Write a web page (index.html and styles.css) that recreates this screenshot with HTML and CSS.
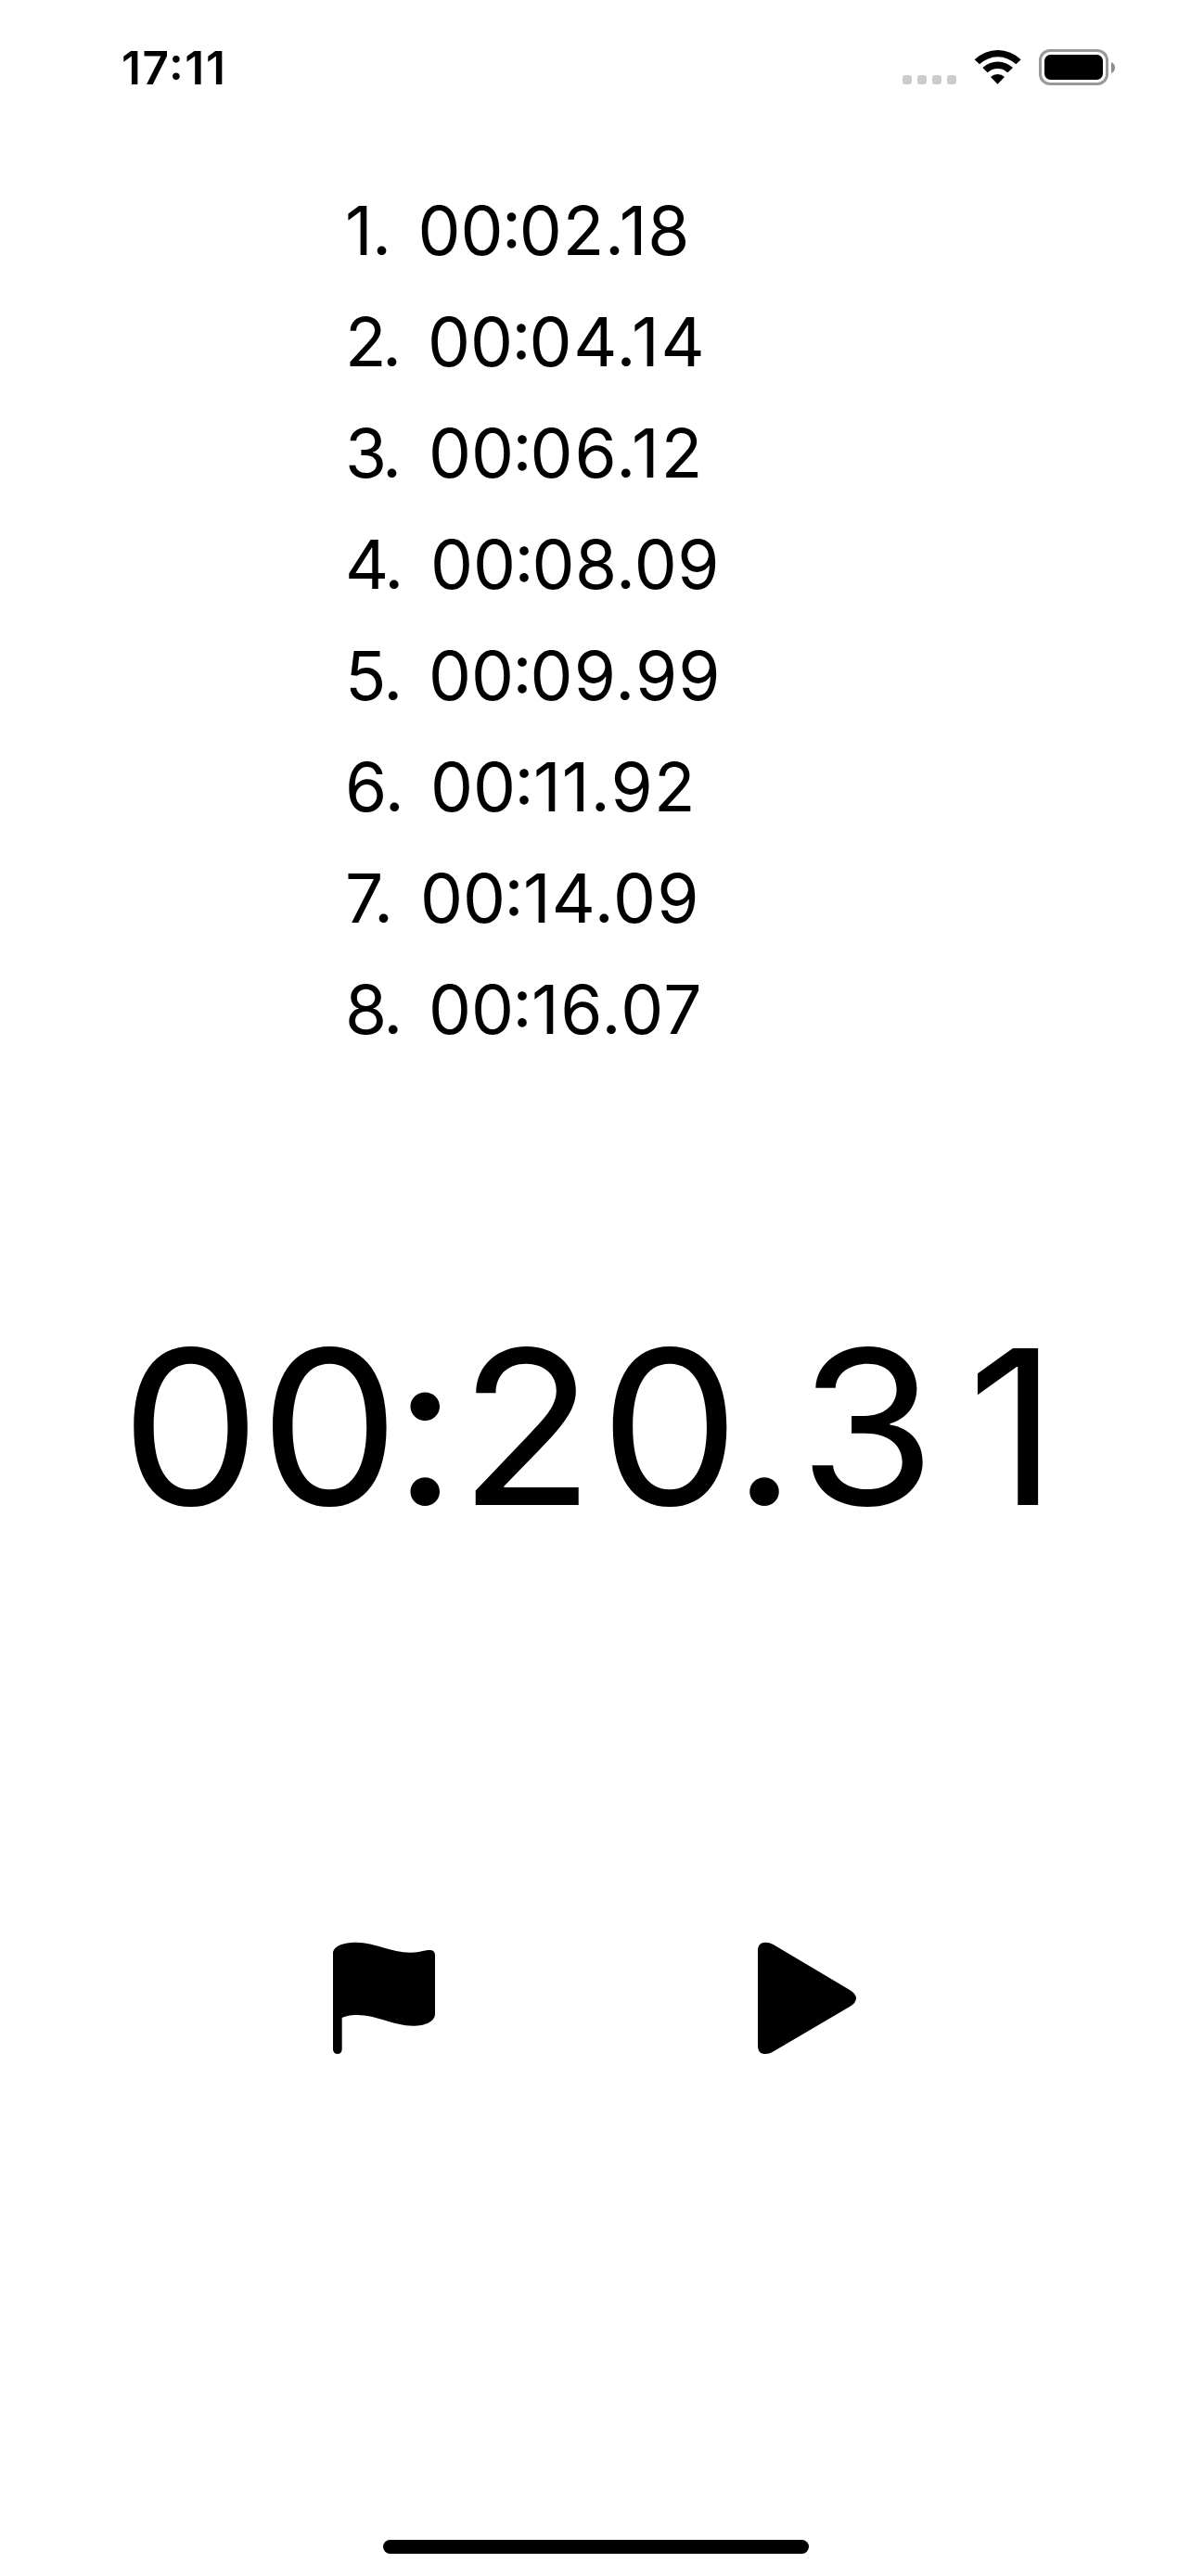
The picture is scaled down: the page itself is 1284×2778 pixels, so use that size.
FILE: index.html
```
<!DOCTYPE html>
<html lang="en">
<head>
<meta charset="utf-8">
<title>Stopwatch</title>
<link rel="stylesheet" href="styles.css">
</head>
<body>
<div class="screen">
  <header class="status">
    <time class="status-time">17:11</time>
    <div class="status-icons">
      <div class="signal"><i></i><i></i><i></i><i></i></div>
      <svg class="wifi" viewBox="300 69 154 117" aria-hidden="true">
        <path d="M302 103A106 106 0 0 1 452 103L436 118A84.500 84.500 0 0 0 318 118Z"/>
        <path d="M328 129A71 71 0 0 1 426 129L409 145A47 47 0 0 0 344 145Z"/>
        <path d="M354 159A32 32 0 0 1 399 159L376.500 182Z"/>
      </svg>
      <div class="battery"><div class="battery-level"></div></div>
      <svg class="battery-tip" viewBox="0 0 4 12" aria-hidden="true"><path d="M0 0C2.500 1 4 3.200 4 6S2.500 11 0 12Z"/></svg>
    </div>
  </header>

  <ol class="laps">
    <li><span class="lap-no">1.</span><span class="lap-time">00<i>:</i><span>02.18</span></span></li>
    <li><span class="lap-no">2.</span><span class="lap-time">00<i>:</i><span>04.14</span></span></li>
    <li><span class="lap-no">3.</span><span class="lap-time">00<i>:</i><span>06.12</span></span></li>
    <li><span class="lap-no">4.</span><span class="lap-time">00<i>:</i><span>08.09</span></span></li>
    <li><span class="lap-no">5.</span><span class="lap-time">00<i>:</i><span>09.99</span></span></li>
    <li><span class="lap-no">6.</span><span class="lap-time">00<i>:</i><span>11.92</span></span></li>
    <li><span class="lap-no">7.</span><span class="lap-time">00<i>:</i><span>14.09</span></span></li>
    <li><span class="lap-no">8.</span><span class="lap-time">00<i>:</i><span>16.07</span></span></li>
  </ol>

  <div class="clock"><span class="m1">0</span><span class="m2">0</span><span class="colon">:</span><span class="s1">2</span><span class="s2">0</span><span class="dot">.</span><span class="c1">3</span><span class="c2">1</span></div>

  <div class="controls">
    <svg viewBox="0 0 450 450" role="img" aria-label="Lap">
      <path d="M57 80C57 56 90 44 132 44C194 44 243 77 308 77C342 77 350 69 370 69Q387 69 387 86V275C387 300 355 314 316 314C250 314 200 279 135 279C110 279 95 284 86 288V391A14.500 14 0 0 1 57 391Z"/>
    </svg>
    <svg viewBox="0 0 450 450" role="img" aria-label="Start">
      <path d="M51 72C51 52 60 44 76 44Q88 44 101 51L347 197Q369 210 369 225Q369 240 347 253L98 399Q88 405 76 405C60 405 51 397 51 377Z"/>
    </svg>
  </div>

  <div class="home-indicator"></div>
</div>
</body>
</html>
```
FILE: styles.css
```
* { box-sizing: border-box; margin: 0; padding: 0; }

body {
  background: #fff;
  color: #000;
  font-family: Inter, "Liberation Sans", sans-serif;
}

.screen {
  display: flex;
  flex-direction: column;
  width: 1284px;
  height: 2778px;
}

/* Status bar */
.status {
  display: flex;
  justify-content: space-between;
  height: 188px;
  padding: 43px 82px 0 131px;
}
.status-time {
  font-size: 49.5px;
  font-weight: 600;
  line-height: 60px;
  letter-spacing: 1.6px;
  font-feature-settings: "calt" 1;
}
.status-icons { display: flex; padding-top: 10px; }
.signal { display: flex; gap: 6px; padding-top: 28px; }
.signal i { width: 10px; height: 10px; border-radius: 3px; background: #ccc; }
.wifi { width: 51.333px; height: 39px; margin-left: 19px; }
.battery {
  width: 75px;
  height: 39px;
  margin-left: 18.667px;
  padding: 3px;
  border: 3px solid #999;
  border-radius: 12px;
}
.battery-level { height: 27px; border-radius: 6.5px; background: #000; }
.battery-tip { width: 4px; height: 12px; margin: 13.5px 0 0 3px; fill: #8c8c8c; }

/* Laps */
.laps { list-style: none; padding-left: 372px; }
.laps li {
  display: flex;
  height: 120px;
  font-size: 73px;
  line-height: 121px;
  white-space: nowrap;
}
.lap-no { flex: none; width: 90px; }
.laps li:nth-child(1) .lap-no { width: 78.4px; letter-spacing: -0.7px; }
.laps li:nth-child(2) .lap-no { width: 89px; letter-spacing: -4.5px; }
.laps li:nth-child(3) .lap-no { letter-spacing: -3.5px; }
.laps li:nth-child(4) .lap-no { width: 92px; letter-spacing: -2.4px; }
.laps li:nth-child(5) .lap-no { letter-spacing: -1.2px; }
.laps li:nth-child(6) .lap-no { width: 92px; }
.laps li:nth-child(7) .lap-no { width: 81px; letter-spacing: -1.2px; }
.laps li:nth-child(8) .lap-no { letter-spacing: -2.3px; }

/* Colon centred on the digits, set a little tighter */
.lap-time i {
  margin-left: -1.5px;
  font-style: normal;
  font-feature-settings: "case" 1;
  letter-spacing: -2.2px;
}
.laps li:nth-child(n+6) i { letter-spacing: -0.7px; }
.laps li:nth-child(1) .lap-time span { letter-spacing: 0.85px; }
.laps li:nth-child(2) .lap-time span { letter-spacing: 1.7px; }
.laps li:nth-child(3) .lap-time span { letter-spacing: 2px; }
.laps li:nth-child(4) .lap-time span { letter-spacing: 0.5px; }
.laps li:nth-child(5) .lap-time span { letter-spacing: 1.15px; }
.laps li:nth-child(6) .lap-time span { letter-spacing: 1.2px; }
.laps li:nth-child(7) .lap-time span { letter-spacing: 1.2px; }
.laps li:nth-child(8) .lap-time span { letter-spacing: 1.5px; }

/* Running clock: each character has its own advance */
.clock {
  margin: 250px 0 0 130px;
  font-size: 232.5px;
  line-height: 281px;
  white-space: nowrap;
  font-kerning: none;
  font-feature-settings: "calt" 0;
  transform: scaleX(1.03);
  transform-origin: 0 50%;
}
.m1 { letter-spacing: -1.3px; }
.m2 { letter-spacing: -6.9px; }
.colon { letter-spacing: 1.9px; }
.s1 { letter-spacing: 5.7px; }
.s2 { letter-spacing: -7.9px; }
.dot { letter-spacing: 2.4px; }
.c1 { letter-spacing: 32.8px; }

/* Buttons */
.controls { display: flex; gap: 310px; margin-top: 401px; padding-left: 340px; }
.controls svg { width: 150px; height: 150px; }

.home-indicator {
  width: 459px;
  height: 15px;
  margin: auto 0 24px 413px;
  border-radius: 7.5px;
  background: #000;
}
```
